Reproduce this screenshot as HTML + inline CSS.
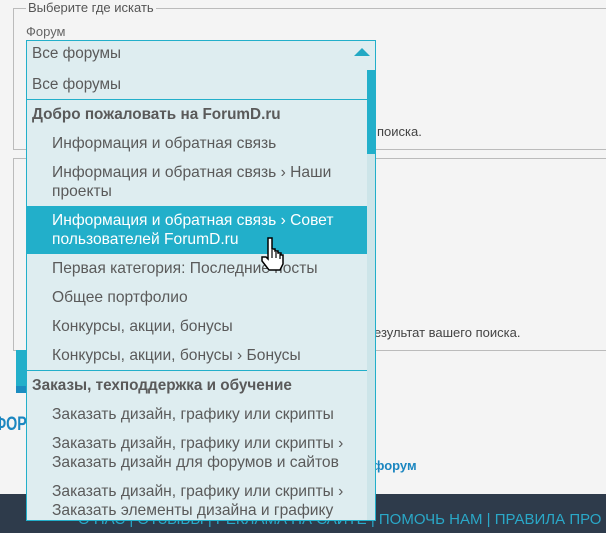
<!DOCTYPE html><html><head><meta charset="utf-8"><style>
body{margin:0;width:606px;height:533px;background:#f4f4f4;font-family:"Liberation Sans","DejaVu Sans",sans-serif;position:relative;overflow:hidden;color:#555}
.a{position:absolute;white-space:nowrap}
.t{font-size:15.6px;color:#5a5a5a;line-height:19px}
.s{font-size:13px;color:#444}
</style></head><body>
<div class="a" style="left:13px;top:8px;width:600px;height:140px;border:1px solid #bbb;border-right:none"></div>
<div class="a s" style="left:26px;top:0px;background:#f4f4f4;padding:0 2px;font-size:13px;color:#555">Выберите где искать</div>
<div class="a s" style="left:26px;top:24px;color:#666">Форум</div>
<div class="a s" style="left:377px;top:124px">поиска.</div>
<div class="a" style="left:13px;top:158px;width:600px;height:191px;border:1px solid #bbb;border-right:none"></div>
<div class="a s" style="left:374px;top:325px">езультат вашего поиска.</div>
<div class="a" style="left:16px;top:350px;width:10px;height:36px;background:#22afca"></div>
<div class="a" style="left:16px;top:386px;width:10px;height:7px;background:#1b8cc0"></div>
<div class="a" style="left:-6px;top:414px;font-weight:bold;font-size:19px;color:#1b86c0;transform:scaleX(.75);transform-origin:left">ФОРУМ</div>
<div class="a" style="left:373px;top:458px;font-weight:bold;font-size:13px;color:#1b86c0">форум</div>
<div class="a" style="left:0;top:494px;width:606px;height:39px;background:#2e3b4b"></div>
<div class="a" style="left:78px;top:511px;font-size:15px;color:#2aa8c8">О НАС | ОТЗЫВЫ | РЕКЛАМА НА САЙТЕ | ПОМОЧЬ НАМ | ПРАВИЛА ПРО</div>
<div class="a" style="left:26px;top:40px;width:348px;height:29px;border:1px solid #22afca;background:#deedf0"></div>
<div class="a t" style="left:32px;top:44px;font-size:15.3px">Все форумы</div>
<svg class="a" style="left:353px;top:46px" width="18" height="12"><path d="M1 10 L9 2 L17 10 Z" fill="#22a9c4"/></svg>
<div class="a" style="left:26px;top:70px;width:348px;height:450px;border:1px solid #22afca;border-top:none;background:#deedf0;overflow:hidden"></div>
<div class="a" style="left:367px;top:70px;width:8px;height:450px;background:#cde5e9"></div>
<div class="a" style="left:367px;top:70px;width:8px;height:84px;background:#22afca"></div>
<div class="a" style="left:27px;top:99px;width:340px;height:1px;background:#22afca"></div>
<div class="a" style="left:27px;top:370px;width:340px;height:1px;background:#22afca"></div>
<div class="a" style="left:27px;top:206px;width:340px;height:48px;background:#22afca"></div>
<div class="a t" style="left:32px;top:75px;font-size:15.3px">Все форумы</div>
<div class="a t" style="left:32px;top:105px;font-weight:bold;font-size:15.3px">Добро пожаловать на ForumD.ru</div>
<div class="a t" style="left:52px;top:134px">Информация и обратная связь</div>
<div class="a t" style="left:52px;top:163px">Информация и обратная связь › Наши<br>проекты</div>
<div class="a t" style="left:52px;top:211px;color:#fff">Информация и обратная связь › Совет<br>пользователей ForumD.ru</div>
<div class="a t" style="left:52px;top:259px">Первая категория: Последние посты</div>
<div class="a t" style="left:52px;top:288px">Общее портфолио</div>
<div class="a t" style="left:52px;top:317px">Конкурсы, акции, бонусы</div>
<div class="a t" style="left:52px;top:346px">Конкурсы, акции, бонусы › Бонусы</div>
<div class="a t" style="left:32px;top:376px;font-weight:bold;font-size:15.3px">Заказы, техподдержка и обучение</div>
<div class="a t" style="left:52px;top:405px">Заказать дизайн, графику или скрипты</div>
<div class="a t" style="left:52px;top:434px">Заказать дизайн, графику или скрипты ›<br>Заказать дизайн для форумов и сайтов</div>
<div class="a t" style="left:52px;top:482px">Заказать дизайн, графику или скрипты ›<br>Заказать элементы дизайна и графику</div>
<svg class="a" style="left:255px;top:236px" width="30" height="36"><path d="M13 2 h4 v11 h3 v2 h3 v2 h3 v2 h2 v9 l-3 6 h-11 l-7 -9 v-4 h4 l2 2 V2z" fill="#fff" stroke="#000" stroke-width="1.5"/><path d="M17 14v8M21 16v6M25 18v5" stroke="#000" stroke-width="1.2"/></svg>
</body></html>
